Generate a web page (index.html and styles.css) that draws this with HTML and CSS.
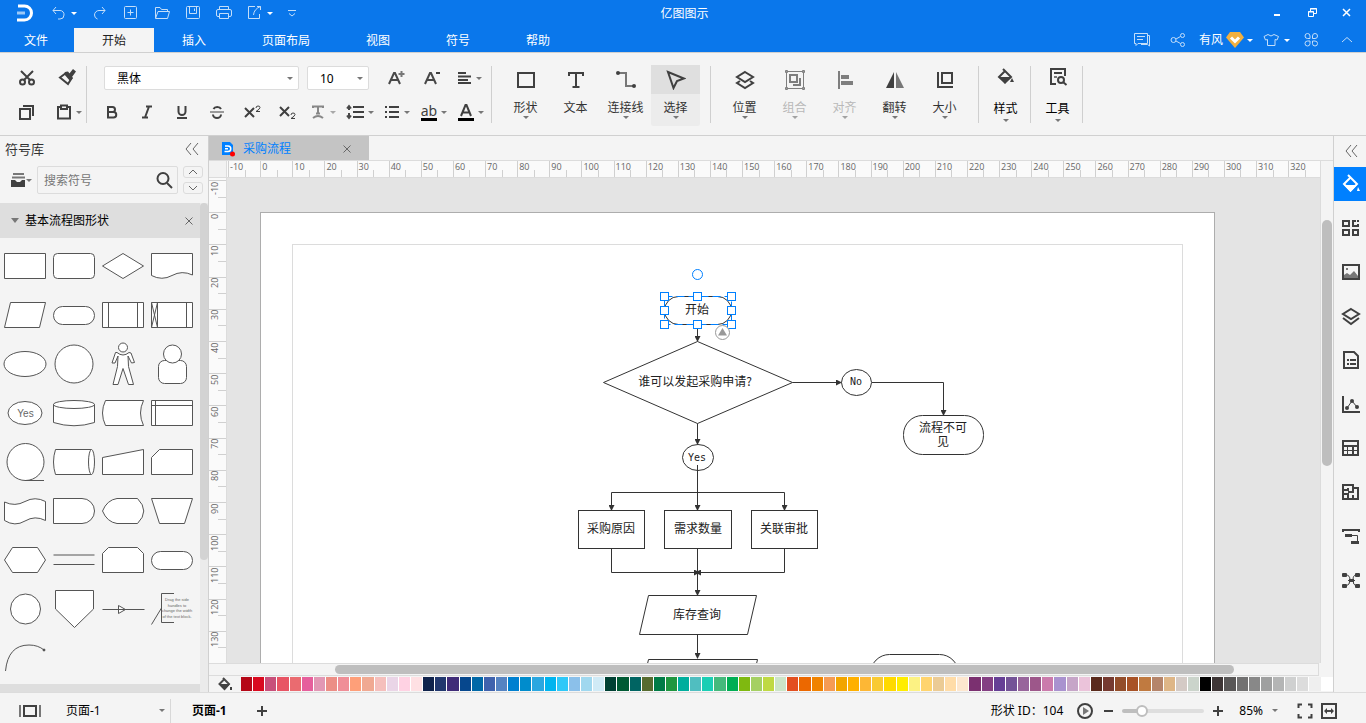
FILE: index.html
```html
<!DOCTYPE html>
<html lang="zh-CN">
<head>
  <meta charset="UTF-8">
  <meta name="viewport" content="width=device-width, initial-scale=1.0">
  <title>亿图图示</title>
  <link rel="stylesheet" href="styles.css">
</head>
<body>
  <div class="app">
    <header class="header">
      <div class="titlebar">
        <svg class="logo" width="18" height="18" viewBox="0 0 18 18"><path d="M2 2H8.500a7 7 0 0 1 0 14H1" fill="none" stroke="#fff" stroke-width="3"/><path d="M1 9H9" stroke="#9cc9f7" stroke-width="3"/></svg>
        <div class="quick">
          <button class="tool with-caret" aria-label="撤销"><svg width="16" height="16" viewBox="0 0 16 16"><path d="M5 2L2 5.500L5 9M2 5.500H9a4 4 0 0 1 4 4.500a4 4 0 0 1-4 4H7"/></svg><i class="caret"></i></button>
          <button class="tool" aria-label="重做"><svg width="16" height="16" viewBox="0 0 16 16"><path d="M10 2L13 5.500L10 9M13 5.500H7A4.500 4.500 0 0 0 2.500 10q0 3 3 4"/></svg></button>
          <button class="tool" aria-label="新建"><svg width="16" height="16" viewBox="0 0 16 16"><rect x="1.500" y="1.500" width="12" height="12" rx="1"/><path d="M7.500 4.500V10.500M4.500 7.500H10.500"/></svg></button>
          <button class="tool" aria-label="打开"><svg width="16" height="16" viewBox="0 0 16 16"><path d="M1.500 13V2.500H6L7.500 4.500H13.500V6.500M1.500 13.500L4 6.500H15.500L13.500 13.500Z"/></svg></button>
          <button class="tool" aria-label="保存"><svg width="16" height="16" viewBox="0 0 16 16"><rect x="1.500" y="1.500" width="13" height="12" rx="1"/><path d="M4.500 1.500V8.500H11.500V1.500M9.500 3.500V6"/></svg></button>
          <button class="tool" aria-label="打印"><svg width="16" height="16" viewBox="0 0 16 16"><path d="M3.500 4.500V1.500H12.500V4.500M3.500 11.500H2A1.500 1.500 0 0 1 .5 10V6A1.500 1.500 0 0 1 2 4.500H14A1.500 1.500 0 0 1 15.500 6V10A1.500 1.500 0 0 1 14 11.500H12.500M3.500 8.500H12.500V13.500H3.500Z"/></svg></button>
          <button class="tool with-caret" aria-label="导出"><svg width="16" height="16" viewBox="0 0 16 16"><path d="M8 1.500H1.500V13.500H12.500V9M10 1.500H13.500V5M13.500 1.500Q7 4 6.500 10"/></svg><i class="caret"></i></button>
          <button class="tool more" aria-label="自定义"><svg width="16" height="16" viewBox="0 0 16 16"><path d="M4 5.500H12M5 8.500L8 11L11 8.500"/></svg></button>
        </div>
        <h1>亿图图示</h1>
        <div class="window-buttons">
          <button aria-label="最小化"><svg width="12" height="12" viewBox="0 0 12 12"><path d="M3 8H9" stroke-width="2"/></svg></button>
          <button aria-label="还原"><svg width="12" height="12" viewBox="0 0 12 12"><path d="M4.500 4V1.500H10.500V6.500H8M2.500 4.500H7.500V9.500H2.500Z"/><path d="M4 2H11M2 5H8"/></svg></button>
          <button aria-label="关闭"><svg width="12" height="12" viewBox="0 0 12 12"><path d="M2 2L9 9M9 2L2 9" stroke-width="1.500"/></svg></button>
        </div>
      </div>
      <div class="menubar">
        <nav class="tabs">
          <a class="tab tab-file" href="#">文件</a>
          <a class="tab active" href="#">开始</a>
          <a class="tab" href="#">插入</a>
          <a class="tab" href="#">页面布局</a>
          <a class="tab" href="#">视图</a>
          <a class="tab" href="#">符号</a>
          <a class="tab" href="#">帮助</a>
        </nav>
        <div class="account">
          <button aria-label="评论"><svg width="16" height="16" viewBox="0 0 16 16"><path d="M.5 1.500H13.500V11.500H4L2 13.500V11.500H.5ZM3 4.500H11M3 7.500H9M14 3.500H15.500V14L13.500 12.500H7"/></svg></button>
          <button class="share" aria-label="分享"><svg width="16" height="16" viewBox="0 0 16 16"><circle cx="3.500" cy="8" r="2.500"/><circle cx="12.500" cy="3.500" r="2"/><circle cx="12.500" cy="12.500" r="2"/><path d="M6 7L10.500 4.500M6 9L10.500 11.500"/></svg></button>
          <button class="user">有风 <svg width="18" height="16" viewBox="0 0 18 16"><path class="gem" d="M4 0H14L18 5.500L9 16L0 5.500Z"/><path class="gem-v" d="M5 5.500L9 9.500L13 5.500"/></svg><i class="caret"></i></button>
          <button class="with-caret" aria-label="主题"><svg width="16" height="16" viewBox="0 0 16 16"><path d="M5 2.500L1 4.500L2.500 8L4.500 7.500V13.500H12V7.500L14 8L15.500 4.500L11 2.500Q8 5.500 5 2.500Z"/></svg><i class="caret"></i></button>
          <button class="apps" aria-label="应用"><svg width="16" height="16" viewBox="0 0 16 16"><path d="M7 6.500H4.500A2.500 2.500 0 1 1 7 4ZM9.500 6.500V4A2.500 2.500 0 1 1 12 6.500ZM7 9V11.500A2.500 2.500 0 1 1 4.500 9ZM9.500 9H12A2.500 2.500 0 1 1 9.500 11.500Z"/></svg></button>
          <button aria-label="收起"><svg width="16" height="16" viewBox="0 0 16 16"><path d="M3 10L8 5.500L13 10"/></svg></button>
        </div>
      </div>
    </header>

    <div class="ribbon">
      <div class="group clipboard">
        <button aria-label="剪切"><svg width="18" height="18" viewBox="0 0 18 18"><g class="line"><circle cx="4.500" cy="13" r="2.500"/><circle cx="13.500" cy="13" r="2.500"/><path d="M3 2L12 11M15 2L6 11"/></g></svg></button>
        <button aria-label="格式刷"><svg width="18" height="18" viewBox="0 0 18 18"><path class="line" d="M8 4L13.500 9.500L10 15L2 8.500Z"/><path class="fill" d="M7 3L10 2.500L15 9L12 12L6 5ZM11 5L15 0L18 2.500L14 8Z"/></svg></button>
        <button aria-label="复制"><svg width="18" height="18" viewBox="0 0 18 18"><path class="line" d="M2 6H12V16H2ZM5 3H15V13"/></svg></button>
        <button class="with-caret paste" aria-label="粘贴"><svg width="16" height="18" viewBox="0 0 16 18"><path class="line" d="M5 4H2V15.500H14V4H11M5 2.500H11V6H5Z"/></svg><i class="caret"></i></button>
      </div>
      <div class="group font">
        <div class="row">
          <label class="select select-font"><select aria-label="字体"><option>黑体</option></select><i class="caret"></i></label>
          <label class="select select-size"><select aria-label="字号"><option>10</option></select><i class="caret"></i></label>
          <button class="wide" aria-label="增大字号"><svg width="18" height="18" viewBox="0 0 18 18"><path class="line thick" d="M2 15L7 4H8L13 15M4 11H11"/><path class="line soft" d="M14.500 2V8M11.500 5H17.500"/></svg></button>
          <button class="wide" aria-label="减小字号"><svg width="18" height="18" viewBox="0 0 18 18"><path class="line thick" d="M2 15L7 4H8L13 15M4 11H11"/><path class="line" d="M13 4H17"/></svg></button>
          <button class="with-caret align" aria-label="对齐"><svg width="16" height="16" viewBox="0 0 16 16"><path class="line" d="M2 3H10M2 6.500H15M2 10H12M2 13H15"/></svg><i class="caret"></i></button>
        </div>
        <div class="row format">
          <button aria-label="加粗"><svg width="16" height="16" viewBox="0 0 16 16"><path class="line" d="M4 3H8.500a2.500 2.500 0 0 1 0 5H4ZM4 8H9.500a2.700 2.700 0 0 1 0 5.500H4Z"/></svg></button>
          <button aria-label="斜体"><svg width="16" height="16" viewBox="0 0 16 16"><path class="line" d="M7 2.500H13M3 13.500H9M10 2.500L6 13.500"/></svg></button>
          <button aria-label="下划线"><svg width="16" height="16" viewBox="0 0 16 16"><path class="line" d="M4.500 2V7.500a3.500 3.500 0 0 0 7 0V2M3 14H13"/></svg></button>
          <button aria-label="删除线"><svg width="16" height="16" viewBox="0 0 16 16"><path class="line" d="M12 5a4 3 0 0 0-7.500 0M4 10.500a4 3.500 0 0 0 8 0"/><path class="line thin" d="M1 8H15"/></svg></button>
          <button aria-label="上标"><svg width="18" height="18" viewBox="0 0 18 18"><path class="line" d="M2 5L11 14M11 5L2 14"/><path class="line thin" d="M13 5q0-2 2-2t2 1.500q0 1.500-4 4H17"/></svg></button>
          <button aria-label="下标"><svg width="18" height="18" viewBox="0 0 18 18"><path class="line" d="M2 4L11 13M11 4L2 13"/><path class="line thin" d="M13 12q0-2 2-2t2 1.500q0 1.500-4 4H17"/></svg></button>
          <div class="dropdowns">
            <button class="with-caret disabled" aria-label="文字效果"><svg width="16" height="16" viewBox="0 0 16 16"><path class="line" d="M3 4V2.500H13V4M8 2.500V9M6 9.500H10M3 14Q8 10 13 14"/></svg><i class="caret"></i></button>
            <button class="with-caret" aria-label="行距"><svg width="18" height="16" viewBox="0 0 18 16"><path class="line" d="M7 3H18M7 8H18M7 13H18"/><path class="line thick" d="M1 4.500L3 2L5 4.500M3 2V6M3 9V14M1 11.500L3 14L5 11.500"/></svg><i class="caret"></i></button>
            <button class="with-caret" aria-label="项目符号"><svg width="16" height="16" viewBox="0 0 16 16"><path class="line" d="M1 3H3M5 3H15M1 8H3M5 8H15M1 13H3M5 13H15"/></svg><i class="caret"></i></button>
            <button class="with-caret" aria-label="突出显示"><span class="color-text">ab</span><i class="caret"></i></button>
            <button class="with-caret" aria-label="字体颜色"><span class="color-text font-color"><svg width="14" height="13" viewBox="0 0 14 13"><path class="line" d="M2 12L6.500 1H7.500L12 12M4 8.500H10"/></svg></span><i class="caret"></i></button>
          </div>
        </div>
      </div>
      <div class="group big draw">
        <button><span><svg width="20" height="20" viewBox="0 0 20 20"><rect class="line" x="2" y="3" width="16" height="14"/></svg></span>形状<i class="caret"></i></button>
        <button><span><svg width="20" height="20" viewBox="0 0 20 20"><path class="line" d="M3 6V3H17V6M10 3V17M6.500 17H13.500"/></svg></span>文本<i class="caret none"></i></button>
        <button><span><svg width="22" height="20" viewBox="0 0 22 20"><path class="line soft" d="M3 3H11V16H18"/><circle class="fill" cx="3" cy="3" r="2"/><circle class="fill" cx="19" cy="16" r="2"/></svg></span>连接线<i class="caret"></i></button>
        <button class="selected"><span><svg width="20" height="20" viewBox="0 0 20 20"><path class="line" d="M2 2L18 8.500L11 11L7.500 18Z"/></svg></span>选择<i class="caret"></i></button>
      </div>
      <div class="group big">
        <button><span><svg width="20" height="20" viewBox="0 0 20 20"><path class="line" d="M10 2L18 7L10 12L2 7ZM5 11L2 13L10 18L18 13L15 11"/></svg></span>位置<i class="caret"></i></button>
        <button class="disabled"><span><svg width="20" height="20" viewBox="0 0 20 20"><g class="line thin"><path d="M1.500 1.500H18.500V18.500H1.500Z"/><path d="M.5.5h2v2h-2zM17.500.5h2v2h-2zM.5 17.500h2v2h-2zM17.500 17.500h2v2h-2z"/></g><path class="line" d="M5 5H12V12H5ZM14 9H15V15H9V14"/></svg></span>组合<i class="caret"></i></button>
        <button class="disabled"><span><svg width="20" height="20" viewBox="0 0 20 20"><path class="line" d="M4 1V19"/><path class="fill" d="M6 5H14V9H6ZM6 11H18V15H6Z"/></svg></span>对齐<i class="caret"></i></button>
        <button><span><svg width="20" height="20" viewBox="0 0 20 20"><path class="fill" d="M9 2V18H1Z"/><path class="fill soft" d="M11 2V18H19Z"/></svg></span>翻转<i class="caret"></i></button>
        <button><span><svg width="20" height="20" viewBox="0 0 20 20"><path class="line" d="M3 2V17H18M7 3H17V13H7Z"/></svg></span>大小<i class="caret"></i></button>
      </div>
      <div class="group big single">
        <button><span><svg width="20" height="20" viewBox="0 0 20 20"><path class="line" d="M7 2L15 10L9 15.500L3 10L9 4"/><path class="fill" d="M3 10H15L9 17ZM16 11L18 15H14Z"/></svg></span>样式<i class="caret"></i></button>
      </div>
      <div class="group big single">
        <button><span><svg width="20" height="20" viewBox="0 0 20 20"><path class="line" d="M8 17H3V2H17V9M6 6H14"/><path class="line soft" d="M6 10H9"/><circle class="line" cx="13" cy="13" r="3"/><path class="line" d="M15 15L18.500 18"/></svg></span>工具<i class="caret"></i></button>
      </div>
    </div>

    <div class="main">
      <aside class="library">
        <div class="library-title">
          <h2>符号库</h2>
          <button aria-label="收起"><svg width="16" height="16" viewBox="0 0 16 16"><path class="line hair" d="M7 2L2 8L7 14M14 2L9 8L14 14"/></svg></button>
        </div>
        <div class="library-search">
          <button class="library-menu" aria-label="符号库菜单"><svg width="16" height="16" viewBox="0 0 16 16"><path class="line soft" d="M3 2H14M2 5.500H15"/><path class="fill" d="M1 8H5L7 10H10L12 8H15V15H1Z"/></svg><i class="caret"></i></button>
          <div class="search">
            <input type="text" placeholder="搜索符号" aria-label="搜索符号">
            <button aria-label="搜索"><svg width="18" height="18" viewBox="0 0 18 18"><circle class="line" cx="8" cy="7.500" r="5.500"/><path class="line" d="M12 12L17 17"/></svg></button>
          </div>
          <div class="stepper">
            <button aria-label="上一个"><svg width="12" height="8" viewBox="0 0 12 8"><path class="line hair" d="M2 6L6 2L10 6"/></svg></button>
            <button aria-label="下一个"><svg width="12" height="8" viewBox="0 0 12 8"><path class="line hair" d="M2 2L6 6L10 2"/></svg></button>
          </div>
        </div>
        <div class="library-body">
          <div class="library-list">
            <div class="library-header">
              <i class="caret"></i>
              <h3>基本流程图形状</h3>
              <button aria-label="关闭"><svg width="10" height="10" viewBox="0 0 10 10"><path class="line hair" d="M1.500 1.500L8.500 8.500M8.500 1.500L1.500 8.500"/></svg></button>
            </div>
            <div class="shapes">
              <svg viewBox="0 0 49 49"><path d="M4.500 12.500H45.500V37.500H4.500Z"/></svg>
              <svg viewBox="0 0 49 49"><rect x="4.500" y="12.500" width="41" height="25" rx="4"/></svg>
              <svg viewBox="0 0 49 49"><path d="M4.500 25L25 12.500L45.500 25L25 37.500Z"/></svg>
              <svg viewBox="0 0 49 49"><path d="M4.500 12.500H45.500V34Q35 29 25 34.500T4.500 34.500Z"/></svg>

              <svg viewBox="0 0 49 49"><path d="M10.500 12.500H45.500L39.500 37.500H4.500Z"/></svg>
              <svg viewBox="0 0 49 49"><rect x="4.500" y="16.500" width="41" height="18" rx="9"/></svg>
              <svg viewBox="0 0 49 49"><path d="M4.500 12.500H45.500V37.500H4.500ZM10.500 12.500V37.500M39.500 12.500V37.500"/></svg>
              <svg viewBox="0 0 49 49"><path d="M4.500 12.500H45.500V37.500H4.500ZM10.500 12.500V37.500M39.500 12.500V37.500M4.500 12.500L10.500 37.500M10.500 12.500L4.500 37.500"/></svg>

              <svg viewBox="0 0 49 49"><ellipse cx="25" cy="25" rx="21" ry="12.500"/></svg>
              <svg viewBox="0 0 49 49"><circle cx="25" cy="25" r="19"/></svg>
              <svg viewBox="0 0 49 49"><circle cx="25" cy="8.500" r="4.500"/><path d="M19 13.500Q25 18.500 31 13.500L33 14L36.500 23.500L33.500 24L30 17L30.500 27.500L35.500 45.500H30.500L25 29.500L20 45.500H15L19.500 27.500L20 17L17 24H14L17.500 13.500Z"/></svg>
              <svg viewBox="0 0 49 49"><rect x="11.500" y="21.500" width="28" height="23" rx="6"/><circle cx="25.500" cy="15" r="9"/></svg>

              <svg viewBox="0 0 49 49"><ellipse cx="25" cy="25" rx="17" ry="11.500"/><text x="25.500" y="29">Yes</text></svg>
              <svg viewBox="0 0 49 49"><path d="M4.500 16V34.500Q25 41 45.500 34.500V16"/><ellipse cx="25" cy="16.500" rx="20.500" ry="4"/></svg>
              <svg viewBox="0 0 49 49"><path d="M7.500 12.500H45.500Q39.500 25 45.500 37.500H7.500Q1.500 25 7.500 12.500Z"/></svg>
              <svg viewBox="0 0 49 49"><path d="M4.500 12.500H45.500V37.500H4.500ZM4.500 17.500H45.500M8.500 12.500V37.500"/></svg>

              <svg viewBox="0 0 49 49"><circle cx="25.500" cy="25" r="18.500"/><path d="M25 43.500H44"/></svg>
              <svg viewBox="0 0 49 49"><path d="M42.500 12.500H6.500Q2.500 25 6.500 37.500H42.500"/><ellipse cx="42.500" cy="25" rx="3" ry="12.500"/></svg>
              <svg viewBox="0 0 49 49"><path d="M4.500 20.500L45.500 12.500V37.500H4.500Z"/></svg>
              <svg viewBox="0 0 49 49"><path d="M12.500 12.500H45.500V37.500H4.500V20.500Z"/></svg>

              <svg viewBox="0 0 49 49"><path d="M4.500 16Q15 21 25 15.500T45.500 15.500V34.500Q35 29 25 35T4.500 34.500Z"/></svg>
              <svg viewBox="0 0 49 49"><path d="M4.500 12.500H33A12.500 12.500 0 0 1 33 37.500H4.500Z"/></svg>
              <svg viewBox="0 0 49 49"><path d="M19 12.500H39.500Q52 25 39.500 37.500H19Q9 36 4.500 25Q9 14 19 12.500Z"/></svg>
              <svg viewBox="0 0 49 49"><path d="M4.500 12.500H45.500L37.500 37.500H12.500Z"/></svg>

              <svg viewBox="0 0 49 49"><path d="M12.500 12.500H37.500L45.500 25L37.500 37.500H12.500L4.500 25Z"/></svg>
              <svg viewBox="0 0 49 49"><path d="M4.500 20H45.500M4.500 29.500H45.500"/></svg>
              <svg viewBox="0 0 49 49"><path d="M10.500 12.500H39.500L45.500 18.500V37.500H4.500V18.500Z"/></svg>
              <svg viewBox="0 0 49 49"><rect x="4.500" y="16.500" width="41" height="18" rx="9"/></svg>

              <svg viewBox="0 0 49 49"><circle cx="25.500" cy="25" r="15"/></svg>
              <svg viewBox="0 0 49 49"><path d="M6.500 6.500H44.500V25L25.500 43.500L6.500 25Z"/></svg>
              <svg viewBox="0 0 49 49"><path d="M4.500 25.500H46.500M20.500 21.500L27.500 25.500L20.500 29.500Z"/></svg>
              <svg viewBox="0 0 49 49"><path class="open" d="M27 9.500H14.500V38.500H27M14.500 24L4.500 40.500"/><text class="tiny" x="30" y="17">Drag the side</text><text class="tiny" x="30" y="23">handles to</text><text class="tiny" x="30" y="28">change the width</text><text class="tiny" x="30" y="34">of the text block.</text></svg>

              <svg viewBox="0 0 49 49"><path class="open" d="M5.500 38Q8 12 29 12Q38 12 44 17"/><circle class="dot" cx="44" cy="17" r="1"/></svg>
            </div>
            <div class="library-next"></div>
          </div>
          <div class="library-scroll"><div class="thumb"></div></div>
        </div>
      </aside>

      <section class="workspace">
        <div class="doc-tabs">
          <div class="doc-tab">
            <svg width="16" height="16" viewBox="0 0 16 16"><path d="M2 1H10L13 4V14H2Z" fill="#0080ff"/><path d="M5 5H8a2.500 2.500 0 0 1 0 5.500H4.500M5 7.700H8" fill="none" stroke="#fff" stroke-width="1.500"/><circle cx="12.500" cy="13" r="2.500" fill="#f00"/></svg>
            <a href="#">采购流程</a>
            <button aria-label="关闭"><svg width="10" height="10" viewBox="0 0 10 10"><path class="line hair" d="M1.500 1.500L8.500 8.500M8.500 1.500L1.500 8.500"/></svg></button>
          </div>
        </div>
        <div class="editor">
          <div class="ruler-corner"></div>
          <div class="ruler ruler-x" id="rulerX"></div>
          <div class="scroll-y"><div class="thumb"></div></div>
          <div class="ruler ruler-y" id="rulerY"></div>
          <div class="canvas">
            <div class="sheet">
              <svg class="diagram" width="953" height="675" viewBox="0 0 953 675">
                <defs>
                  <marker id="arrow" viewBox="0 0 6 6" refX="5" refY="3" markerWidth="6" markerHeight="6" markerUnits="userSpaceOnUse" orient="auto"><path class="arrow" d="M0 0L6 3L0 6Z"/></marker>
                </defs>
                <rect class="margin" x="31.500" y="31.500" width="890" height="620"/>

                <g class="connectors">
                  <path d="M436.500 112V128"/>
                  <path d="M531.500 169.500H580"/>
                  <path d="M611 169.500H682.500V202"/>
                  <path d="M436.500 210.500V231"/>
                  <path d="M436.500 252V297"/>
                  <path d="M436.500 279.500H350.500V297"/>
                  <path d="M436.500 279.500H523.500V297"/>
                  <path d="M350.500 335.500V359.500H438"/>
                  <path d="M523.500 335.500V359.500H435"/>
                  <path d="M436.500 335.500V382"/>
                  <path d="M436.500 421.500V445"/>
                </g>

                <g class="nodes">
                  <rect x="403.500" y="83.500" width="67" height="28" rx="14"/>
                  <path d="M342.500 169.500L436.500 128.500L531.500 169.500L436.500 210.500Z"/>
                  <ellipse cx="595.500" cy="169.500" rx="15" ry="13"/>
                  <rect x="642.500" y="202.500" width="80" height="39" rx="19"/>
                  <ellipse cx="437" cy="244.500" rx="15.500" ry="13"/>
                  <rect x="317.500" y="297.500" width="66" height="38"/>
                  <rect x="403.500" y="297.500" width="67" height="38"/>
                  <rect x="490.500" y="297.500" width="66" height="38"/>
                  <path d="M387.500 382.500H495.500L486.500 421.500H378.500Z"/>
                  <path d="M387.500 446.500H496.500L487.500 485.500H378.500Z"/>
                  <rect x="609.500" y="441.500" width="88" height="39" rx="19"/>
                </g>

                <g class="labels">
                  <text x="436" y="101">开始</text>
                  <text x="434" y="173">谁可以发起采购申请?</text>
                  <text class="latin" x="595" y="172">No</text>
                  <text x="682" y="219">流程不可<tspan x="682" dy="14">见</tspan></text>
                  <text class="latin" x="436" y="248">Yes</text>
                  <text x="350" y="320">采购原因</text>
                  <text x="437" y="320">需求数量</text>
                  <text x="523" y="320">关联审批</text>
                  <text x="436" y="406">库存查询</text>
                </g>

                <g class="selection">
                  <path class="frame" d="M403.500 83.500H470.500V111.500H403.500Z"/>
                  <circle cx="436.500" cy="61.500" r="5"/>
                  <rect x="399.500" y="79.500" width="8" height="8"/>
                  <rect x="432.500" y="79.500" width="8" height="8"/>
                  <rect x="466.500" y="79.500" width="8" height="8"/>
                  <rect x="399.500" y="93.500" width="8" height="8"/>
                  <rect x="466.500" y="93.500" width="8" height="8"/>
                  <rect x="399.500" y="107.500" width="8" height="8"/>
                  <rect x="432.500" y="107.500" width="8" height="8"/>
                  <rect x="466.500" y="107.500" width="8" height="8"/>
                </g>
                <g class="hint"><circle cx="461.500" cy="119.500" r="7"/><path d="M461.500 115L466 122.500H457Z"/></g>
              </svg>
            </div>
          </div>
        </div>
        <div class="scroll-x"><div class="thumb"></div></div>
        <div class="palette">
          <button aria-label="填充"><svg width="16" height="16" viewBox="0 0 16 16"><path class="line thick" d="M6 2L12 8L7.500 13L2.500 8L7.500 3"/><path class="fill" d="M2 8H13L7.500 14ZM13 11H15V14H13Z"/></svg></button>
          <div class="swatches" id="swatches"></div>
        </div>
      </section>

      <aside class="sidebar">
        <button class="collapse" aria-label="收起"><svg width="16" height="16" viewBox="0 0 16 16"><path class="line hair" d="M8 2L3 8L8 14M14 2L9 8L14 14"/></svg></button>
        <button class="active" aria-label="填充"><svg width="20" height="20" viewBox="0 0 20 20"><path class="line" d="M7 1L16 10L9.500 16.500L3 10L9.500 3.500"/><path class="fill" d="M3 11H16L9.500 18ZM17 13L19 17H16Z"/></svg></button>
        <button aria-label="符号"><svg width="20" height="20" viewBox="0 0 20 20"><path class="line" d="M2 3H8V8H2ZM15 3H12V8H17V6M2 12H8V17H2ZM12 12H17V17H12Z"/><path class="fill" d="M16 2H18V4H16Z"/></svg></button>
        <button aria-label="图片"><svg width="20" height="20" viewBox="0 0 20 20"><path class="line" d="M2 3H18V17H2Z"/><path class="fill soft" d="M3 16V13L6 11L9 13L13 9L17 14V16ZM5 6H7V8H5Z"/></svg></button>
        <button aria-label="图层"><svg width="20" height="20" viewBox="0 0 20 20"><path class="line" d="M10 3L18 8L10 13L2 8ZM2 12L10 18L18 12"/></svg></button>
        <button aria-label="备注"><svg width="20" height="20" viewBox="0 0 20 20"><path class="line" d="M3 2H13L17 6V18H3Z"/><path class="line" d="M6 10H8M9 10H15M6 14H8M9 14H15"/></svg></button>
        <button aria-label="图表"><svg width="20" height="20" viewBox="0 0 20 20"><path class="line" d="M2 2V18H19"/><path class="line thin" d="M6 14L11 7L16 13"/><circle class="fill" cx="6" cy="14" r="2"/><circle class="fill" cx="11" cy="7" r="2"/><circle class="fill" cx="16" cy="13" r="2"/></svg></button>
        <button aria-label="表格"><svg width="20" height="20" viewBox="0 0 20 20"><path class="line" d="M2 3H17V17H2Z"/><path class="fill" d="M2 7H18V9H2ZM2 12H18V13H2ZM6 8H7V18H6ZM11 8H13V18H11Z"/></svg></button>
        <button aria-label="平面图"><svg width="20" height="20" viewBox="0 0 20 20"><path class="line" d="M2 3H12V6H17V17H2ZM2 8H7V6M12 6V9M2 12H7V17M12 17V13"/><path class="line thick" d="M7 10H13"/></svg></button>
        <button aria-label="甘特图"><svg width="20" height="20" viewBox="0 0 20 20"><path class="line" d="M2 6V4H18V6"/><path class="fill" d="M4 8H11V11H4ZM10 15H18V18H10Z"/><path class="line thin" d="M11 9.500H16.500V15"/></svg></button>
        <button aria-label="思维导图"><svg width="20" height="20" viewBox="0 0 20 20"><path class="line thin" d="M5 5Q9 5 9 10T5 16M15 5Q12 5 12 10T15 16M7 10.500H14"/><g class="fill"><rect x="1" y="3" width="5" height="4" rx="1"/><rect x="14" y="3" width="5" height="4" rx="1"/><rect x="1" y="14" width="5" height="4" rx="1"/><rect x="14" y="14" width="5" height="4" rx="1"/><rect x="8" y="9" width="5" height="3"/></g></svg></button>
      </aside>
    </div>

    <footer class="statusbar">
      <button class="view" aria-label="页面视图"><svg width="24" height="14" viewBox="0 0 24 14"><path class="line" d="M6 2H18V12H6Z"/><path class="line soft" d="M2 1V13M22 1V13"/></svg></button>
      <label class="page-select"><select aria-label="页面"><option>页面-1</option></select><i class="caret"></i></label>
      <a class="page-tab" href="#">页面-1</a>
      <button aria-label="添加页面"><svg width="12" height="12" viewBox="0 0 12 12"><path class="line" d="M1 6H11M6 1V11"/></svg></button>
      <div class="status-right">
        <span class="shape-id">形状 ID：104</span>
        <button aria-label="播放"><svg width="18" height="18" viewBox="0 0 18 18"><circle class="line" cx="9" cy="9" r="7"/><path class="fill soft" d="M7 5L13 9L7 13Z"/></svg></button>
        <button aria-label="缩小"><svg width="12" height="12" viewBox="0 0 12 12"><path class="line" d="M2 6H11"/></svg></button>
        <input class="zoom" type="range" min="0" max="100" value="20" aria-label="缩放">
        <button aria-label="放大"><svg width="12" height="12" viewBox="0 0 12 12"><path class="line" d="M1 6H11M6 1V11"/></svg></button>
        <button class="zoom-value">85%<i class="caret"></i></button>
        <button aria-label="全屏"><svg width="16" height="16" viewBox="0 0 16 16"><path class="line" d="M1.500 5V1.500H5M11 1.500H14.500V5M14.500 11V14.500H11M5 14.500H1.500V11"/></svg></button>
        <button aria-label="适应宽度"><svg width="16" height="16" viewBox="0 0 16 16"><path class="line" d="M1 1H15V15H1Z"/><path class="line thick" d="M4 8H12"/><path class="fill" d="M3 8L6 5V11ZM13 8L10 5V11Z"/></svg></button>
      </div>
    </footer>
  </div>

  <script src="script.js"></script>
</body>
</html>
```
FILE: styles.css
```css
* {
  box-sizing: border-box;
}

body {
  margin: 0;
  font-family: "Noto Sans", "Noto Sans CJK SC", sans-serif;
  font-size: 12px;
  line-height: 16px;
  color: #000;
  background-color: #f4f4f4;
}

h1, h2, h3 {
  margin: 0;
  font-size: 12px;
  font-weight: normal;
}

a {
  color: inherit;
  text-decoration: none;
}

svg {
  display: block;
  flex: none;
}

button {
  display: flex;
  align-items: center;
  justify-content: center;
  padding: 0;
  border: none;
  background: none;
  font: inherit;
  color: inherit;
}

select, input {
  min-width: 0;
  margin: 0;
  border: none;
  background: none;
  font: inherit;
  color: inherit;
  appearance: none;
  outline: none;
}

.app {
  display: flex;
  flex-direction: column;
  height: 100vh;
  overflow: hidden;
}

.caret {
  flex: none;
  width: 0;
  height: 0;
  border: 3px solid transparent;
  border-top: 3px solid #777;
  border-bottom: none;
}

.caret.none {
  visibility: hidden;
}

.with-caret {
  gap: 4px;
}

/* 图标线条 */
.line {
  fill: none;
  stroke: #404040;
  stroke-width: 2;
}

.line.thick {
  stroke: #484848;
}

.line.thin {
  stroke-width: 1;
}

.line.hair {
  stroke: #666;
  stroke-width: 1;
}

.line.soft {
  stroke: #777;
}

.fill {
  fill: #404040;
}

.fill.soft {
  fill: #777;
}

/* 标题栏 */
.header {
  color: #fff;
  background-color: #0a77eb;
  border-bottom: 1px solid #d0d0d0;
}

.header svg {
  fill: none;
  stroke: #c4def9;
}

.header .caret {
  border-top-color: #fff;
}

.titlebar {
  display: grid;
  grid-template-columns: 1fr auto 1fr;
  align-items: center;
  height: 28px;
  padding: 0 13px 2px 16px;
}

.titlebar .logo {
  grid-area: 1 / 1;
}

.quick {
  grid-area: 1 / 1;
  display: flex;
  gap: 15px;
  margin-left: 35px;
}

.quick .more {
  margin-left: -4px;
}

.titlebar h1 {
  grid-area: 1 / 2;
  padding-top: 2px;
}

.window-buttons {
  grid-area: 1 / 3;
  display: flex;
  justify-content: flex-end;
  gap: 23px;
}

.window-buttons svg {
  stroke: #fff;
}

.menubar {
  display: flex;
  justify-content: space-between;
}

.tabs {
  display: flex;
}

.tab {
  padding: 5px 28px 3px;
}

.tab-file {
  padding-left: 24px;
  padding-right: 26px;
}

.tab.active {
  color: #222;
  background-color: #f4f4f4;
}

.account {
  display: flex;
  align-items: center;
  gap: 18px;
  padding-right: 11px;
}

.account .share {
  margin-left: 2px;
}

.account .user {
  gap: 3px;
  margin-left: -5px;
}

.account .user + button {
  margin-left: -8px;
}

.account .with-caret {
  gap: 5px;
}

.account .apps {
  margin-left: -5px;
  margin-right: 2px;
}

.header .gem {
  fill: #f2b040;
  stroke: none;
}

.header .gem-v {
  stroke: #fff;
  stroke-width: 3;
}

/* 功能区 */
.ribbon {
  display: flex;
  padding: 12px 0 9px;
  border-bottom: 1px solid #d0d0d0;
}

.group {
  margin: 1px 0 3px;
  border-right: 1px solid #cfcfcf;
}

.clipboard {
  display: grid;
  grid-template-columns: 38px 38px;
  grid-auto-rows: 24px;
  gap: 10px 2px;
  height: 57px;
  padding-left: 8px;
}

.clipboard .paste {
  margin-right: -4px;
}

.font {
  height: 57px;
  padding: 0 7px 0 17px;
}

.row {
  display: flex;
  gap: 8px;
  height: 24px;
  margin-bottom: 10px;
}

.select {
  display: flex;
  align-items: center;
  border: 1px solid #dcdcdc;
  border-radius: 2px;
  background-color: #fff;
}

.select select {
  flex: 1;
  padding: 2px 12px 0;
}

.select .caret {
  margin: 0 5px 0 -11px;
}

.select-font {
  width: 195px;
}

.select-size {
  width: 62px;
  margin-right: 5px;
}

.wide {
  width: 28px;
}

.align {
  width: 30px;
}

.format > button {
  width: 16px;
}

.format {
  gap: 19px;
}

.dropdowns {
  display: flex;
  gap: 11px;
  margin-left: -4px;
}

.dropdowns button {
  width: 26px;
}

.color-text {
  display: flex;
  justify-content: center;
  width: 18px;
  border-bottom: 3px solid #000;
  font-size: 14px;
  line-height: 15px;
  color: #404040;
}

.font-color {
  padding: 1px 0;
}

.big {
  display: flex;
  gap: 1px;
  height: 57px;
  padding: 0 9px;
}

.big.draw {
  padding-right: 10px;
}

.big button {
  flex-direction: column;
  justify-content: flex-start;
  width: 49px;
  height: 61px;
  margin-top: -1px;
  border-radius: 2px;
  color: #333;
}

.big button span {
  display: flex;
  align-items: center;
  justify-content: center;
  width: 100%;
  height: 29px;
  margin-bottom: 6px;
}

.big .selected {
  background-color: #ececec;
}

.big .selected span {
  background-color: #dfdfdf;
}

.big.single {
  padding: 0 0 0 2px;
}

.single button {
  color: #000;
}

.single button span {
  height: 24px;
  margin-bottom: 12px;
}

.single .caret {
  margin-top: 2px;
}

.disabled {
  opacity: .6;
}

.big .disabled {
  color: #999;
  opacity: .65;
}

/* 符号库 */
.main {
  display: flex;
  flex: 1;
  min-height: 0;
}

.library {
  display: flex;
  flex-direction: column;
  flex: none;
  width: 209px;
  border-right: 1px solid #d0d0d0;
}

.library-title {
  display: flex;
  align-items: center;
  justify-content: space-between;
  padding: 3px 8px 7px 5px;
}

.library-title h2 {
  font-size: 13px;
  line-height: 20px;
  color: #333;
}

.library-search {
  display: flex;
  align-items: center;
  gap: 5px;
  height: 28px;
  padding: 0 5px 0 10px;
}

.library-menu {
  width: 22px;
}

.search {
  display: flex;
  flex: 1;
  min-width: 0;
  height: 28px;
  padding: 0 4px 0 6px;
  border: 1px solid #dcdcdc;
  border-radius: 2px;
}

.search input {
  flex: 1;
  padding: 2px 0 0;
}

.search input::placeholder {
  color: #777;
}

.stepper {
  display: flex;
  flex-direction: column;
  gap: 4px;
}

.stepper button {
  width: 20px;
  height: 12px;
  border: 1px solid #dcdcdc;
  border-radius: 3px;
}

.library-body {
  display: flex;
  flex: 1;
  min-height: 0;
  margin-top: 9px;
}

.library-list {
  flex: 1;
  overflow: hidden;
}

.library-header {
  display: flex;
  align-items: center;
  height: 35px;
  padding: 0 6px 0 11px;
  background-color: #dedede;
}

.library-header .caret {
  border-width: 5px 4px 0;
}

.library-header h3 {
  flex: 1;
  margin-left: 6px;
}

.shapes {
  display: grid;
  grid-template-columns: repeat(4, 49px);
  grid-auto-rows: 49px;
  padding: 3px 0 2px;
}

.shapes svg {
  fill: #fff;
  stroke: #555;
}

.shapes .open {
  fill: none;
}

.shapes .dot {
  fill: #333;
}

.shapes text {
  fill: #666;
  stroke: none;
  font-family: "Liberation Sans", sans-serif;
  font-size: 10px;
  text-anchor: middle;
}

.shapes .tiny {
  font-size: 4px;
}

.library-next {
  height: 9px;
  background-color: #dedede;
}

.library-scroll {
  width: 8px;
  background-color: #ebebeb;
}

.library-scroll .thumb {
  height: 73%;
  border-radius: 4px;
  background-color: #d3d3d3;
}

/* 工作区 */
.workspace {
  display: flex;
  flex: 1;
  flex-direction: column;
  min-width: 0;
}

.doc-tabs {
  display: flex;
  height: 25px;
  border-bottom: 1px solid #dcdcdc;
}

.doc-tab {
  display: flex;
  align-items: center;
  width: 160px;
  padding: 2px 17px 0 11px;
  color: #0080ff;
  background-color: #c4c4c4;
}

.doc-tab a {
  flex: 1;
  margin-left: 7px;
}

.editor {
  display: grid;
  grid-template: 17px 1fr / 18px 1fr 13px;
  flex: 1;
  min-height: 0;
}

.ruler-corner {
  border: solid #dcdcdc;
  border-width: 0 1px 1px 0;
  background-color: #f2f2f2;
}

.ruler {
  display: flex;
  min-width: 0;
  min-height: 0;
  font-family: "Open Sans", sans-serif;
  font-size: 9px;
  line-height: 12px;
  color: #666;
  background-color: #fafafa;
}

.ruler div {
  display: flex;
  flex: 1;
  min-width: 0;
  min-height: 0;
}

.ruler-x {
  padding-left: 1px;
  border-bottom: 1px solid #dcdcdc;
}

.ruler-x div {
  border-left: 1px solid #d0d0d0;
}

.ruler-x div::before {
  content: "";
  align-self: flex-end;
  width: 50%;
  height: 7px;
  border-right: 1px solid #d0d0d0;
}

.ruler-x span {
  width: 0;
  margin-left: -50%;
}

.ruler-y {
  flex-direction: column;
  padding-top: 2px;
  border-right: 1px solid #dcdcdc;
}

.ruler-y div {
  flex-direction: column;
  align-items: flex-end;
  border-top: 1px solid #d0d0d0;
}

.ruler-y div::before {
  content: "";
  flex: none;
  width: 8px;
  height: 50%;
  border-bottom: 1px solid #d0d0d0;
}

.ruler-y span {
  display: flex;
  justify-content: flex-end;
  align-self: flex-start;
  height: 28px;
  margin-top: -16px;
  writing-mode: vertical-rl;
  transform: rotate(180deg);
}

.canvas {
  overflow: hidden;
  min-width: 0;
  background-color: #e4e4e4;
}

.sheet {
  width: 955px;
  margin: 34px 0 0 33px;
  border: 1px solid #adadad;
  background-color: #fff;
}

.scroll-y {
  grid-row: 1 / 3;
  grid-column: 3;
  padding: 59px 1px 0;
  border-left: 1px solid #dcdcdc;
}

.scroll-y .thumb {
  height: 246px;
  border-radius: 5px;
  background-color: #bebebe;
}

.scroll-x {
  height: 13px;
  margin-right: 14px;
  padding: 1px 84px 0 126px;
  border: 1px solid #dcdcdc;
  border-left: none;
}

.scroll-x .thumb {
  height: 9px;
  border-radius: 5px;
  background-color: #bebebe;
}

.palette {
  display: flex;
  gap: 8px;
  height: 16px;
  padding: 1px 0 1px 8px;
}

.swatches {
  display: flex;
  flex: 1;
  gap: 1px;
  background-color: #fff;
}

.swatches button {
  flex: 1;
}

/* 流程图 */
.margin {
  fill: none;
  stroke: #dcdcdc;
}

.connectors path {
  fill: none;
  stroke: #333;
  marker-end: url(#arrow);
}

.arrow {
  fill: #333;
}

.nodes {
  fill: none;
  stroke: #333;
}

.labels {
  fill: #222;
  font-family: "Noto Sans CJK SC", sans-serif;
  font-size: 12px;
  text-anchor: middle;
}

.labels .latin {
  font-family: "DejaVu Sans Mono", monospace;
  font-size: 10px;
}

.selection {
  fill: #fff;
  stroke: #0080ff;
}

.selection .frame {
  fill: none;
  stroke-dasharray: 8 4;
}

.hint circle {
  fill: #fff;
  stroke: #999;
}

.hint path {
  fill: #999;
}

/* 右侧栏 */
.sidebar {
  display: flex;
  flex: none;
  flex-direction: column;
  gap: 10px;
  width: 33px;
  border-left: 1px solid #d0d0d0;
}

.sidebar button {
  height: 34px;
  padding-left: 2px;
}

.sidebar .collapse {
  height: 21px;
  padding-top: 9px;
}

.sidebar .active {
  background-color: #0080ff;
}

.sidebar .active .line {
  stroke: #fff;
}

.sidebar .active .fill {
  fill: #fff;
}

/* 状态栏 */
.statusbar {
  display: flex;
  align-items: center;
  height: 31px;
  padding: 5px 29px 0 18px;
  border-top: 1px solid #dcdcdc;
}

.page-select {
  display: flex;
  align-items: center;
  width: 129px;
  height: 24px;
  padding: 0 5px 0 24px;
  border-right: 1px solid #d8d8d8;
}

.page-select select {
  flex: 1;
  padding: 0;
}

.page-tab {
  margin: 0 29px 0 21px;
  font-weight: bold;
}

.status-right {
  display: flex;
  align-items: center;
  gap: 8px;
  margin-left: auto;
}

.shape-id {
  margin-right: 5px;
}

.zoom {
  width: 82px;
  height: 12px;
}

.zoom::-webkit-slider-runnable-track {
  height: 4px;
  border-radius: 2px;
  background: linear-gradient(to right, #bebebe 20%, #dedede 20%);
}

.zoom::-webkit-slider-thumb {
  width: 12px;
  height: 12px;
  margin-top: -4px;
  border: 2px solid #bebebe;
  border-radius: 50%;
  background-color: #fff;
  appearance: none;
}

.zoom-value {
  gap: 9px;
  margin: 0 11px 0 7px;
}
```
FILE: script.js
```js
const colors = [
  '#b50717', '#d90a1f', '#c8507a', '#e85464', '#ea6b70', '#e65f9c', '#e297b4', '#ec8e86', '#f08e97', '#fe9f79',
  '#f0a992', '#f5bfbc', '#ead5e7', '#ffd2e3', '#fee0e3', '#10234c', '#22386e', '#402c78', '#06478d', '#0068a7',
  '#3f62ad', '#5583c2', '#0080d0', '#008ccc', '#2ba7e0', '#00b4ef', '#2fc8f8', '#8bc0ea', '#a0d8ef', '#d0eaf6',
  '#004033', '#005a34', '#006462', '#576b2f', '#007b46', '#1f963f', '#00ae9d', '#50bec0', '#1bceb4', '#45b97c',
  '#00ae54', '#7fb910', '#a5d063', '#bfd943', '#cce5c8', '#e34f20', '#ec6800', '#f08300', '#f59b54', '#f2a500',
  '#ffb000', '#fdb735', '#f9ca33', '#ffd900', '#ffed00', '#fcf283', '#ffd46e', '#ebcb95', '#ffdca8', '#fde7cf',
  '#7b3070', '#843f83', '#663f95', '#745397', '#98659c', '#9d578a', '#cb7bac', '#a992cf', '#c6a5c8', '#ebc3da',
  '#5a2a1c', '#763a30', '#934d2a', '#a85226', '#c07a40', '#b5856b', '#deb687', '#d4cac5', '#cbd4cb', '#000000',
  '#3e3636', '#595757', '#727171', '#888888', '#9fa0a0', '#b4b5b5', '#cfd0d0', '#dcdcdc', '#efefef', '#ffffff'
];

document.getElementById('swatches').innerHTML = colors.map(color =>
  `<button style="background-color: ${color}" aria-label="${color}"></button>`
).join('');

// 标尺刻度，每格 10 毫米
function drawRuler(id, count) {
  let html = '';
  for (let i = -1; i < count - 1; i++) {
    html += `<div><span>${i * 10}</span></div>`;
  }
  document.getElementById(id).innerHTML = html;
}

drawRuler('rulerX', 34);
drawRuler('rulerY', 15);
```
